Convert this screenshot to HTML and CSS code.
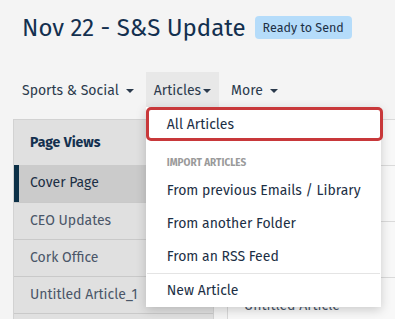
FILE: index.html
```html
<!DOCTYPE html>
<html lang="en">

<head>
  <meta charset="UTF-8">
  <meta name="viewport" content="width=device-width, initial-scale=1.0">
  <title>Nov 22 - S&amp;S Update</title>
  <link rel="stylesheet" href="styles.css">
</head>

<body>

  <header class="page-header">
    <h1>Nov 22 - S&amp;S Update</h1>
    <span class="badge">Ready to Send</span>
  </header>

  <nav class="tabs">
    <div class="tab">Sports &amp; Social <span class="caret"></span></div>
    <div class="tab open">
      Articles<span class="caret tight"></span>
      <div class="dropdown">
        <div class="dd-item selected">All Articles</div>
        <div class="dd-heading">IMPORT ARTICLES</div>
        <div class="dd-item">From previous Emails / Library</div>
        <div class="dd-item">From another Folder</div>
        <div class="dd-item">From an RSS Feed</div>
        <div class="dd-divider"></div>
        <div class="dd-item">New Article</div>
      </div>
    </div>
    <div class="tab">More <span class="caret"></span></div>
  </nav>

  <div class="content">
    <aside class="sidebar">
      <div class="side-head">Page Views</div>
      <div class="side-item active">Cover Page</div>
      <div class="side-item">CEO Updates</div>
      <div class="side-item">Cork Office</div>
      <div class="side-item">Untitled Article_1</div>
      <div class="side-item"></div>
    </aside>

    <main class="panel">
      <div class="row first"></div>
      <div class="row tall"></div>
      <div class="row tall"></div>
      <div class="row">Untitled Article</div>
    </main>
  </div>

</body>

</html>
```

FILE: styles.css
```css
body {
  margin: 0;
  height: 319px;
  background: #f4f4f4;
  font-family: 'Fira Sans', 'Lato', 'Noto Sans', sans-serif;
  color: #1c2f45;
  overflow: hidden;
}

.page-header {
  display: flex;
  align-items: center;
  gap: 9px;
  padding: 12px 22px 0;
  height: 32px;
}

h1 {
  margin: 0;
  font-size: 24px;
  font-weight: 400;
  color: #13304f;
}

.badge {
  background: #b5dcfa;
  color: #1c2f45;
  font-size: 12.5px;
  padding: 3px 8px;
  border-radius: 4px;
  line-height: 17px;
  margin-top: -1px;
}

.tabs {
  display: flex;
  gap: 4px;
  padding: 28px 0 0 14px;
  height: 35px;
  font-size: 14px;
}

.tab {
  position: relative;
  display: flex;
  align-items: center;
  padding: 2px 8px 0;
  color: #2b3a4c;
  white-space: nowrap;
}

.tab.open {
  background: #e8e8e8;
}

.caret {
  display: inline-block;
  margin-left: 7px;
  border-left: 4px solid transparent;
  border-right: 4px solid transparent;
  border-top: 4px solid #2b3a4c;
}

.caret.tight {
  margin-left: 2px;
}

.dropdown {
  position: absolute;
  top: 35px;
  left: 0;
  width: 235px;
  background: #fff;
  box-shadow: 0 3px 10px rgba(0, 0, 0, 0.18);
  z-index: 10;
}

.dd-item {
  padding: 0 21px;
  height: 33px;
  line-height: 33px;
  color: #1c2f45;
}

.dd-item.selected {
  height: 28px;
  line-height: 30px;
  border: 3px solid #c8383a;
  border-radius: 5px;
  padding-left: 18px;
  margin-right: -2px;
}

.dd-heading {
  padding: 16px 21px 5px;
  font-size: 10px;
  font-weight: 700;
  color: #9a9a9a;
}

.dd-divider {
  height: 1px;
  margin: 0 1px;
  background: #e4e4e4;
}

.content {
  display: flex;
  gap: 13px;
  padding: 12px 0 0 13px;
}

.sidebar {
  width: 199px;
  background: #e0e0e0;
  border: 1px solid #d2d2d2;
  border-bottom: none;
  font-size: 14px;
}

.side-head {
  height: 45px;
  line-height: 45px;
  padding-left: 16px;
  font-weight: 700;
  color: #13304f;
}

.side-item {
  height: 36px;
  line-height: 36px;
  padding-left: 16px;
  border-top: 1px solid #c9c9c9;
  color: #4a5668;
}

.side-item.active {
  border-top: none;
  height: 37px;
  background: #cbcbcb;
  border-left: 5px solid #0c3047;
  padding-left: 11px;
  color: #1c2f45;
}

.panel {
  flex: 1;
  background: #f8f8f8;
  border-left: 1px solid #d8d8d8;
  font-size: 14px;
}

.row {
  border-top: 1px solid #dadada;
  height: 45px;
  padding-left: 16px;
  color: #4a5668;
  line-height: 56px;
}

.row.tall {
  height: 55px;
}
```
